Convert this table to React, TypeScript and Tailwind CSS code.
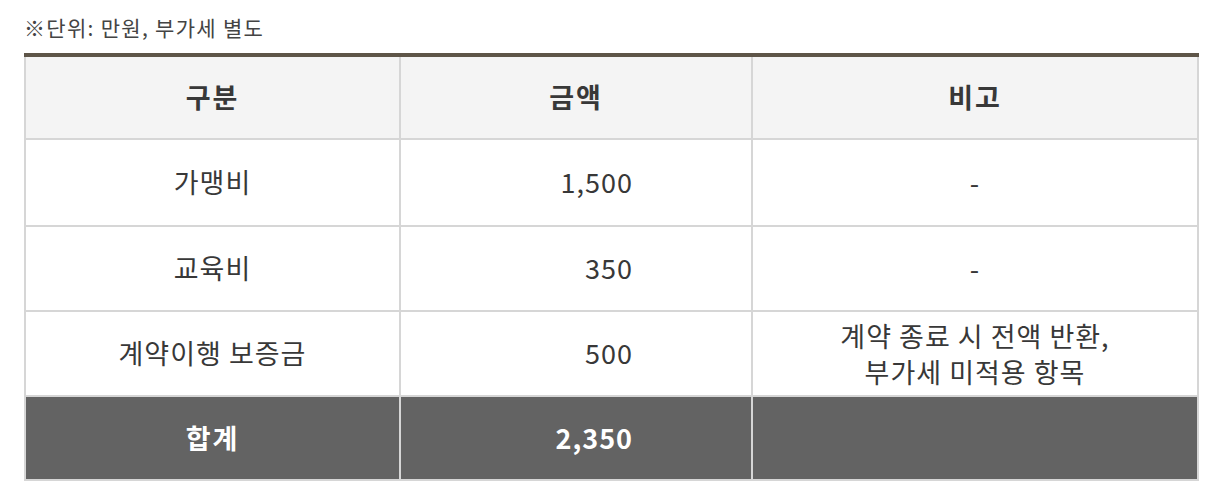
import React from "react";

const rows = [
  { name: "가맹비", amount: "1,500", note: ["-"], h: "h-[85px]" },
  { name: "교육비", amount: "350", note: ["-"], h: "h-[83px]" },
  { name: "계약이행 보증금", amount: "500", note: ["계약 종료 시 전액 반환,", "부가세 미적용 항목"], h: "h-[83px]" },
];

export default function App() {
  return (
    <div
      className="w-[1223px] h-[497px] bg-white text-[#383838]"
      style={{ fontFamily: '"Noto Sans CJK KR", "Noto Sans", sans-serif' }}
    >
      <div className="pl-[24px] pt-[12px] h-[53px] text-[21px] leading-[30px] text-[#444] tracking-[1.3px]">
        ※단위: 만원, 부가세 별도
      </div>
      <div className="ml-[24px] w-[1175px] border-t-4 border-[#5e5548]">
        <div className="grid grid-cols-[373px_350px_444px] gap-[2px] bg-[#d6d6d6] px-[2px] pb-[2px] text-[27px] tracking-[1px]">
          <div className="h-[81px] bg-[#f4f4f4] flex items-center justify-center font-bold tracking-[2px]">구분</div>
          <div className="h-[81px] bg-[#f4f4f4] flex items-center justify-center font-bold tracking-[2px]">금액</div>
          <div className="h-[81px] bg-[#f4f4f4] flex items-center justify-center font-bold tracking-[2px]">비고</div>
          {rows.map((r) => (
            <React.Fragment key={r.name}>
              <div className={`${r.h} bg-white flex items-center justify-center`}>{r.name}</div>
              <div className={`${r.h} bg-white flex items-center justify-end pr-[118px]`}>{r.amount}</div>
              <div className={`${r.h} bg-white flex flex-col items-center justify-center`}>
                {r.note.map((n) => (
                  <span key={n} className="block leading-[36px] h-[36px]">{n}</span>
                ))}
              </div>
            </React.Fragment>
          ))}
          <div className="h-[82px] bg-[#636363] flex items-center justify-center font-bold text-white tracking-[2px]">합계</div>
          <div className="h-[82px] bg-[#636363] flex items-center justify-end pr-[118px] font-bold text-white">2,350</div>
          <div className="h-[82px] bg-[#636363]"></div>
        </div>
      </div>
    </div>
  );
}
